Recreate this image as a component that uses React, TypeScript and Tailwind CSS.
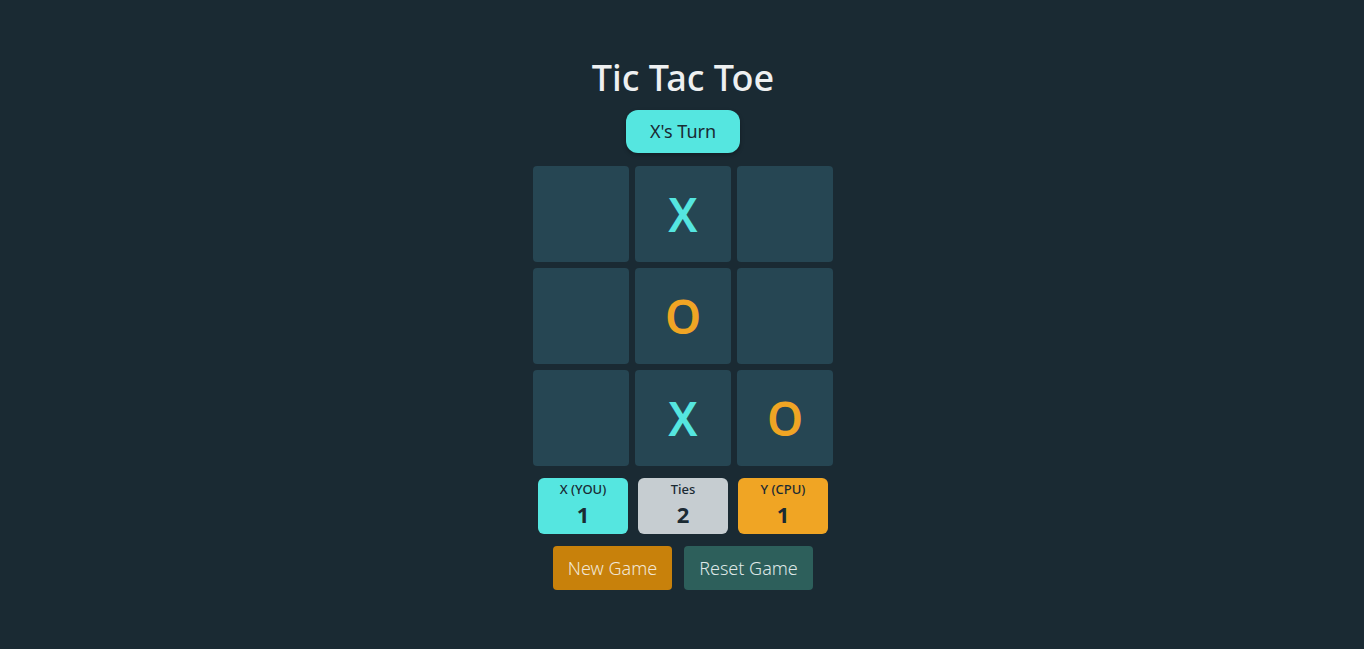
import React from "react";

const board: (string | null)[] = [null, "X", null, null, "O", null, null, "X", "O"];

export default function App() {
  return (
    <div
      className="min-h-screen w-full bg-[#1a2a33] flex flex-col items-center pl-[2px]"
      style={{ fontFamily: '"Noto Sans", "Open Sans", sans-serif' }}
    >
      <h1 className="mt-[56px] h-[44px] text-[36px] leading-[44px] font-medium text-[#eef0f1]">Tic Tac Toe</h1>
      <div className="mt-[10px] w-[114px] h-[43px] rounded-[12px] bg-[#55e6e0] flex items-center justify-center text-[18px] text-[#1a2a33] shadow-[0_2px_4px_rgba(0,0,0,0.3)]">
        X's Turn
      </div>
      <div className="mt-[13px] grid grid-cols-[96px_96px_96px] gap-[6px]">
        {board.map((c, i) => (
          <div
            key={i}
            className="w-[96px] h-[96px] rounded-[4px] bg-[#264653] flex items-center justify-center text-[46px] font-semibold"
          >
            {c === "X" && <span className="text-[#55e6e0]">X</span>}
            {c === "O" && <span className="text-[#f0a524]">O</span>}
          </div>
        ))}
      </div>
      <div className="mt-[12px] flex gap-[10px]">
        <div className="w-[90px] h-[56px] rounded-[6px] bg-[#55e6e0] flex flex-col items-center text-[#1a2a33]">
          <div className="mt-[2px] text-[13px] leading-[18px] font-medium">X (YOU)</div>
          <div className="mt-[2px] text-[22px] leading-[28px] font-bold">1</div>
        </div>
        <div className="w-[90px] h-[56px] rounded-[6px] bg-[#c6cdd1] flex flex-col items-center text-[#1a2a33]">
          <div className="mt-[2px] text-[13px] leading-[18px] font-medium">Ties</div>
          <div className="mt-[2px] text-[22px] leading-[28px] font-bold">2</div>
        </div>
        <div className="w-[90px] h-[56px] rounded-[6px] bg-[#f0a524] flex flex-col items-center text-[#1a2a33]">
          <div className="mt-[2px] text-[13px] leading-[18px] font-medium">Y (CPU)</div>
          <div className="mt-[2px] text-[22px] leading-[28px] font-bold">1</div>
        </div>
      </div>
      <div className="mt-[12px] flex gap-[12px]">
        <button className="w-[119px] h-[44px] rounded-[4px] bg-[#c8810b] text-[#f1e6d6] text-[18px] font-light">New Game</button>
        <button className="w-[129px] h-[44px] rounded-[4px] bg-[#2d5f5b] text-[#dfe8e7] text-[18px] font-light">Reset Game</button>
      </div>
    </div>
  );
}
